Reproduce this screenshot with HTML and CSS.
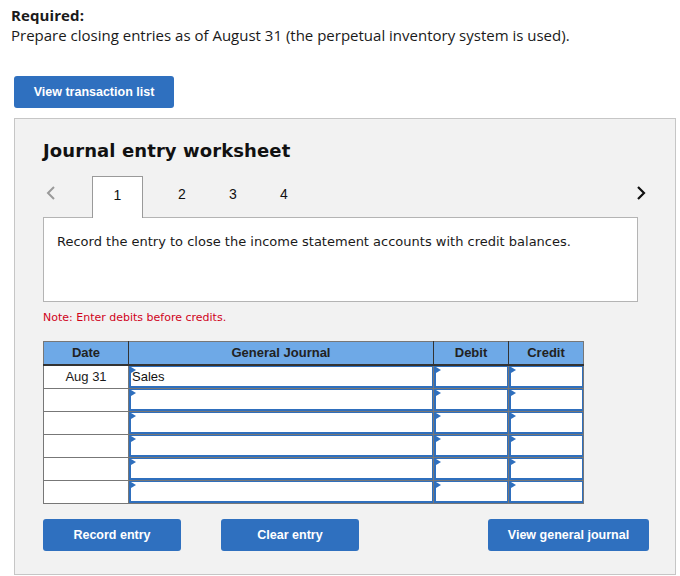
FILE: index.html
```html
<!DOCTYPE html>
<html>
<head>
<meta charset="utf-8">
<link rel="stylesheet" href="styles.css">
</head>
<body>
<div class="required">
  <div class="req-title">Required:</div>
  <div class="req-text">Prepare closing entries as of August 31 (the perpetual inventory system is used).</div>
</div>
<button class="btn btn-top">View transaction list</button>
<div class="panel">
  <h2 class="title">Journal entry worksheet</h2>
  <div class="tabs">
    <span class="arrow prev">
      <svg width="10" height="16" viewBox="0 0 10 16"><path d="M8 2 L2 8 L8 14" fill="none" stroke="#9a9a9a" stroke-width="2"/></svg>
    </span>
    <span class="tab active">1</span>
    <span class="tab t2">2</span>
    <span class="tab t3">3</span>
    <span class="tab t4">4</span>
    <span class="spacer"></span>
    <span class="arrow next">
      <svg width="10" height="16" viewBox="0 0 10 16"><path d="M2 2 L8 8 L2 14" fill="none" stroke="#111" stroke-width="2.2"/></svg>
    </span>
  </div>
  <div class="desc">Record the entry to close the income statement accounts with credit balances.</div>
  <div class="note">Note: Enter debits before credits.</div>
  <table class="journal">
    <colgroup><col class="c-date"><col class="c-gj"><col class="c-amt"><col class="c-amt"></colgroup>
    <thead>
      <tr><th>Date</th><th>General Journal</th><th>Debit</th><th>Credit</th></tr>
    </thead>
    <tbody>
      <tr><td class="date">Aug 31</td><td class="cell"><div class="inp">Sales</div></td><td class="cell"><div class="inp"></div></td><td class="cell"><div class="inp"></div></td></tr>
      <tr><td class="date"></td><td class="cell"><div class="inp"></div></td><td class="cell"><div class="inp"></div></td><td class="cell"><div class="inp"></div></td></tr>
      <tr><td class="date"></td><td class="cell"><div class="inp"></div></td><td class="cell"><div class="inp"></div></td><td class="cell"><div class="inp"></div></td></tr>
      <tr><td class="date"></td><td class="cell"><div class="inp"></div></td><td class="cell"><div class="inp"></div></td><td class="cell"><div class="inp"></div></td></tr>
      <tr><td class="date"></td><td class="cell"><div class="inp"></div></td><td class="cell"><div class="inp"></div></td><td class="cell"><div class="inp"></div></td></tr>
      <tr><td class="date"></td><td class="cell"><div class="inp"></div></td><td class="cell"><div class="inp"></div></td><td class="cell"><div class="inp"></div></td></tr>
    </tbody>
  </table>
  <div class="actions">
    <button class="btn btn-record">Record entry</button>
    <button class="btn btn-clear">Clear entry</button>
    <span class="spacer"></span>
    <button class="btn btn-view">View general journal</button>
  </div>
</div>
</body>
</html>
```
FILE: styles.css
```css
html, body {
  margin: 0;
  padding: 0;
  background: #fff;
}
body {
  font-family: "Open Sans", "Liberation Sans", sans-serif;
  color: #1a1a1a;
  width: 680px;
  height: 576px;
  overflow: hidden;
}
.required {
  padding: 5px 0 0 11px;
  font-size: 15px;
  line-height: 20px;
}
.req-title {
  font-weight: 700;
  letter-spacing: 0.1px;
}
.req-text {
  letter-spacing: 0;
}
.btn {
  display: block;
  background: #2f70bf;
  color: #fff;
  border: none;
  border-radius: 3px;
  font-family: "Liberation Sans", Arial, sans-serif;
  font-weight: 700;
  font-size: 12.5px;
  height: 32px;
  padding: 0;
  cursor: pointer;
}
.btn-top {
  margin: 31px 0 0 14px;
  width: 160px;
}
.panel {
  margin: 10px 0 0 14px;
  width: 662px;
  height: 457px;
  border: 1px solid #c6c6c6;
  background: #f2f2f2;
  padding: 0 0 0 28px;
  box-sizing: border-box;
  display: flex;
  flex-direction: column;
  font-family: "DejaVu Sans", Verdana, sans-serif;
}
.title {
  margin: 20px 0 0 0;
  font-size: 18px;
  line-height: 24px;
  font-weight: 700;
  color: #111;
  letter-spacing: 0.1px;
}
.tabs {
  display: flex;
  align-items: stretch;
  height: 41px;
  margin-top: 13px;
  width: 610px;
  position: relative;
  z-index: 1;
  font-family: "Liberation Sans", Arial, sans-serif;
  font-size: 14px;
}
.arrow {
  display: flex;
  align-items: center;
  padding-bottom: 8px;
}
.prev {
  margin-left: 3px;
  width: 46px;
}
.tab {
  display: flex;
  align-items: center;
  justify-content: center;
  padding-bottom: 6px;
  color: #111;
}
.tab.active {
  width: 49px;
  background: #fff;
  border: 1px solid #9a9a9a;
  border-bottom: none;
  margin-bottom: -1px;
  padding-bottom: 5px;
}
.t2 { width: 78px; }
.t3 { width: 24px; }
.t4 { width: 78px; }
.spacer { flex: 1; }
.next {
  margin-right: 7px;
}
.desc {
  width: 595px;
  height: 85px;
  box-sizing: border-box;
  background: #fff;
  border: 1px solid #b4b4b4;
  padding: 16px 0 0 13px;
  font-size: 13px;
  line-height: 16px;
  color: #1a1a1a;
}
.note {
  margin-top: 9px;
  font-size: 11px;
  line-height: 14px;
  color: #d0021b;
}
.journal {
  margin-top: 16px;
  border-collapse: collapse;
  table-layout: fixed;
  width: 541px;
  font-family: "Liberation Sans", Arial, sans-serif;
  font-size: 13px;
  border: 1px solid #777;
}
.c-date { width: 85px; }
.c-gj { width: 305px; }
.c-amt { width: 75px; }
.journal th {
  background: #6ea9e7;
  height: 23px;
  padding: 0;
  font-weight: 700;
  color: #222;
  border: 1px solid #333;
  border-top-color: #777;
  border-bottom: 2px solid #333;
  box-sizing: border-box;
}
.journal th:first-child { border-left-color: #777; }
.journal th:last-child { border-right-color: #777; }
.journal td {
  height: 23px;
  padding: 0;
  border: 1px solid #777;
  background: #fff;
  box-sizing: border-box;
}
.date {
  text-align: center;
}
.inp {
  position: relative;
  height: 22px;
  box-sizing: border-box;
  border: 1px solid #2f6fbd;
  border-left-width: 2px;
  border-bottom-width: 2px;
  padding: 3px 0 0 1px;
  line-height: 14px;
  color: #111;
}
.inp::before {
  content: "";
  position: absolute;
  left: 0;
  top: 0;
  border-top: 3px solid transparent;
  border-bottom: 3px solid transparent;
  border-left: 5px solid #2f6fbd;
}
.actions {
  display: flex;
  margin-top: 15px;
  width: 606px;
}
.btn-record { width: 138px; }
.btn-clear { width: 138px; margin-left: 40px; }
.btn-view { width: 161px; }
```
